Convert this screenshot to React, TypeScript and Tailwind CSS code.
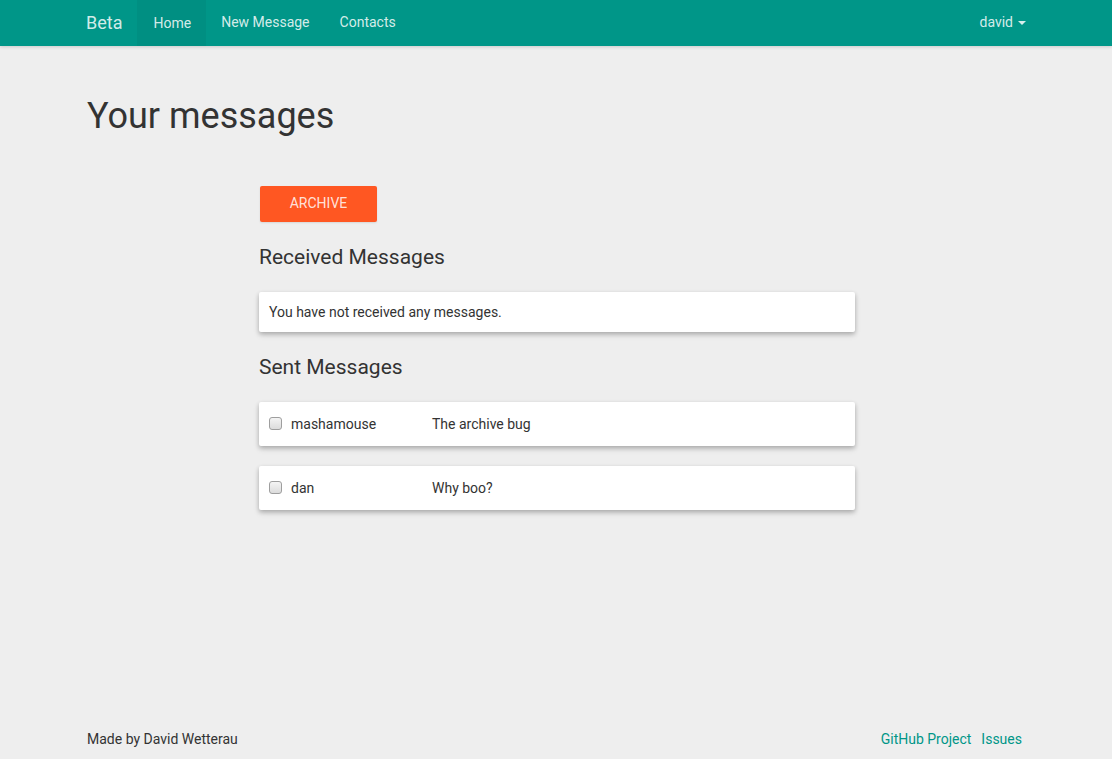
import React from "react";

function Card({ children, h }: { children: React.ReactNode; h: string }) {
  return (
    <div
      className={`bg-white w-[596px] ${h} flex items-center px-[10px] pt-[1px] rounded-[2px] shadow-[0_2px_4px_rgba(0,0,0,0.2),0_3px_6px_rgba(0,0,0,0.12)]`}
    >
      {children}
    </div>
  );
}

function Row({ name, subject }: { name: string; subject: string }) {
  return (
    <Card h="h-[44px]">
      <span className="w-[13px] h-[13px] rounded-[3px] border border-[#9e9e9e] bg-gradient-to-b from-[#f4f4f4] to-[#dcdcdc] shrink-0 -mt-[1px]" />
      <span className="ml-[9px] w-[141px]">{name}</span>
      <span>{subject}</span>
    </Card>
  );
}

export default function App() {
  return (
    <div
      className="min-h-[759px] bg-[#eeeeee] text-[#333] text-[14px] flex flex-col"
      style={{ fontFamily: "Roboto, 'Liberation Sans', sans-serif" }}
    >
      <nav className="bg-[#009688] h-[46px] shadow-[0_1px_3px_rgba(0,0,0,0.15)]">
        <div className="w-[970px] mx-auto flex items-stretch h-full text-[rgba(255,255,255,0.84)] pb-[1px]">
          <div className="px-[15px] flex items-center text-[18px]">Beta</div>
          <ul className="flex items-stretch">
            <li className="pl-[16px] pr-[15px] flex items-center bg-[#008f82] -mb-[1px]">Home</li>
            <li className="px-[15px] flex items-center">New Message</li>
            <li className="px-[15px] flex items-center">Contacts</li>
          </ul>
          <div className="ml-auto px-[15px] flex items-center">
            david
            <span className="ml-[5px] w-0 h-0 border-x-[4px] border-x-transparent border-t-[4px] border-t-[rgba(255,255,255,0.84)]" />
          </div>
        </div>
      </nav>

      <main className="w-[940px] mx-auto flex-1">
        <h1 className="text-[36px] leading-[1.1] mt-[51px] ml-[1px]">Your messages</h1>
        <div className="ml-[173px] mt-[49px]">
          <button className="w-[117px] h-[36px] ml-[1px] bg-[#ff5722] text-[rgba(255,255,255,0.84)] rounded-[2px] text-[14px] shadow-[0_1px_2px_rgba(0,0,0,0.1)]">
            ARCHIVE
          </button>
          <h3 className="text-[21px] leading-[1.1] mt-[24px]">Received Messages</h3>
          <div className="mt-[23px]">
            <Card h="h-[40px]">You have not received any messages.</Card>
          </div>
          <h3 className="text-[21px] leading-[1.1] mt-[24px]">Sent Messages</h3>
          <div className="mt-[23px] flex flex-col gap-[20px]">
            <Row name="mashamouse" subject="The archive bug" />
            <Row name="dan" subject="Why boo?" />
          </div>
        </div>
      </main>

      <footer className="w-[940px] mx-auto flex justify-between items-center h-[40px]">
        <span className="ml-[1px]">Made by David Wetterau</span>
        <span className="text-[#009688] flex gap-[10px] mr-[4px]">
          <span>GitHub Project</span>
          <span>Issues</span>
        </span>
      </footer>
    </div>
  );
}
